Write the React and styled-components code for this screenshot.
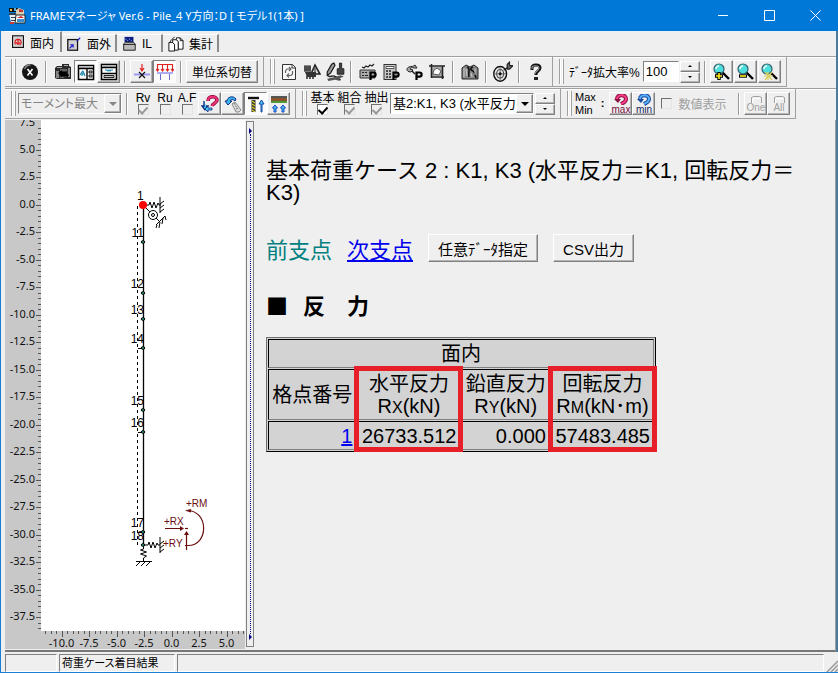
import React, { useState } from "react";
import styled, { createGlobalStyle, css } from "styled-components";

const FACE = "#efefef";
const UI_FONT = '"Liberation Sans", "Noto Sans CJK JP", sans-serif';

// ---- icons ----

const Icon = ({ children, size = 18 }) => (
  <svg width={size} height={size} viewBox="0 0 18 18" fill="none" aria-hidden="true">
    {children}
  </svg>
);

const AppIcon = () => (
  <Icon>
    <path d="M1 1h9v4H1z" fill="#111" />
    <path d="M2 2h2v2H2z" fill="#e8c040" />
    <path d="M6 1h2v3H6z" fill="#5ad" />
    <path d="M1 6h8v10H3z" fill="#e9eef2" />
    <path d="M1 6h8v2H1zM3 10h6v1H3zM3 13h5v1H3z" fill="#345" />
    <path d="M8 3l3-2 5 2v6H8z" fill="#d8d0b0" />
    <path d="M11 2l4 1v2h-4z" fill="#b33" />
    <path d="M8 8h9v8H7z" fill="#fff" stroke="#222" />
    <path d="M9 11l4-2 3 2z" fill="#c22" />
    <path d="M9 12h7v3H9z" fill="#3a8fd0" />
    <path d="M2 15h4v2H2z" fill="#c33" />
  </Icon>
);

const PlaneInIcon = () => (
  <Icon size={14}>
    <rect x="2" y="1" width="14" height="15" fill="#d0d0d0" stroke="#111" strokeWidth="1.4" />
    <path d="M6 12a4 4 0 1 1 5 1M9 6v6M6.500 9.500L9 12l2.500-2.500" stroke="#e01818" strokeWidth="1.5" />
  </Icon>
);

const PlaneOutIcon = () => (
  <Icon size={16}>
    <rect x="2" y="4" width="11" height="12" fill="#d0d0d0" stroke="#111" strokeWidth="1.4" />
    <path d="M4 14l4-4M5 10h3v3M12 6l4-4" stroke="#1818c8" strokeWidth="1.3" />
  </Icon>
);

const InfluenceIcon = () => (
  <Icon size={16}>
    <path d="M4 1h10v6H4z" fill="#0b1e86" />
    <path d="M5 3h1v1H5zM9 3h1v1H9zM7 5h1v1H7zM11 5h1v1h-1z" fill="#fff" />
    <path d="M3 9l2-2h9l2 2v7H3z" fill="#bbb" stroke="#111" />
    <path d="M3 9.500h13" stroke="#111" />
  </Icon>
);

const SummaryIcon = () => (
  <Icon size={17}>
    <path d="M2 8h4l2 2v7H2z" fill="#fff" stroke="#111" />
    <path d="M6 5h4l2 2v9H8v-6L6 8z" fill="#fff" stroke="#111" />
    <path d="M10 3h4l3 3v9h-5V7l-2-2z" fill="#fff" stroke="#111" />
    <path d="M14 3v3h3M4 6l4-4M3 8l1-2" stroke="#111" />
  </Icon>
);

const StopIcon = () => (
  <Icon>
    <circle cx="9" cy="9" r="8" fill="#161616" />
    <path d="M3.500 6a6.500 6.500 0 0 1 6-4" stroke="#888" strokeWidth="1.4" />
    <path d="M6.500 6l5 6.500M11.500 6l-5 6.500" stroke="#fff" strokeWidth="1.600" />
  </Icon>
);

const CameraIcon = () => (
  <Icon>
    <path d="M1 5l2-2h5V1h7v2l2 1v12H3l-2-1z" fill="#2a2a2a" />
    <path d="M10 2h4v1h-4zM3 4h5v1H3z" fill="#a8a8a8" />
    <path d="M2 8h3v7H2zM14 5h2v9h-2z" fill="#858585" />
    <path d="M6 6h7v2H6zM6 14h4v1H6z" fill="#666" />
    <path d="M4 10l4-3v2h4l3 3-2 3v-2H8v1z" fill="#000" />
  </Icon>
);

const SplitViewIcon = () => (
  <Icon>
    <path d="M1.500 2.500h15v14h-15z" fill="#fff" stroke="#000" strokeWidth="1.6" />
    <path d="M2 3h14v2H2z" fill="#bbb" />
    <path d="M2 5.500h15M10 5v11" stroke="#000" strokeWidth="1.400" />
    <path d="M3 12l2-3v4M6 8l2 5M5 11h3" stroke="#1f8ab0" strokeWidth="1.2" />
    <path d="M12 8h3v2h-3zM12 12h3v2h-3z" fill="#ccc" stroke="#222" />
  </Icon>
);

const StackViewIcon = () => (
  <Icon>
    <rect x="1.500" y="1.500" width="15" height="15" fill="#fff" stroke="#000" strokeWidth="1.6" />
    <path d="M2 2h14v2H2z" fill="#bbb" />
    <path d="M2 4.500h14M2 10.500h15" stroke="#000" strokeWidth="1.400" />
    <path d="M5 7h2l1 1 1-1 1 1 1-1h2" stroke="#1f8ab0" strokeWidth="1.2" />
    <path d="M4 12.500h10v2H4z" fill="#ccc" stroke="#222" />
  </Icon>
);

const PointLoadIcon = () => (
  <Icon>
    <path d="M9 1v6M7 5l2 3 2-3" stroke="#e02020" strokeWidth="1.2" />
    <path d="M1 11.500h16" stroke="#9a9af4" strokeWidth="2" />
    <path d="M6 9l6 6M12 9l-6 6" stroke="#111" strokeWidth="1.2" />
  </Icon>
);

const SpreadLoadIcon = () => (
  <Icon>
    <path d="M1.500 8V1.500h15V8M6.500 2v6M11.500 2v6M0 6l1.500 2L3 6M5 6l1.500 2L8 6M10 6l1.500 2L13 6M15 6l1.500 2L18 6" stroke="#e02020" strokeWidth="1.1" />
    <path d="M1 10h16" stroke="#9a9af4" strokeWidth="1.6" />
    <path d="M4.500 11v6M13.500 11v6" stroke="#6c6cc8" />
  </Icon>
);

const RefreshIcon = () => (
  <Icon>
    <path d="M2.500 1.500h10l3 3v12h-13z" fill="#f8f8f8" stroke="#333" />
    <path d="M12 2v3h4" stroke="#333" />
    <path d="M5.500 10V8l1.500-2h4M9 4l2 2-2 2M12.500 8v3L11 12.500H7M9 10.500l-2 2 2 2" stroke="#666" strokeWidth="1.200" />
  </Icon>
);

const LoadEditIcon = () => (
  <Icon>
    <path d="M1 3h7v6H1z" fill="#777" />
    <path d="M1 3h7M1 5h7M1 7h7" stroke="#222" />
    <path d="M8 11l4-9 5 9z" fill="#ddd" stroke="#222" strokeWidth="1.6" />
    <path d="M2 9h11v5H4z" fill="#333" />
    <path d="M4 13v3M7 13v3M10 13v3" stroke="#333" strokeWidth="1.6" />
    <path d="M12 5v4" stroke="#222" />
  </Icon>
);

const BrushIcon = () => (
  <Icon size={20}>
    <path d="M2 9L6 2l2-1 1 2-4 7-3 2z" fill="#999" stroke="#111" />
    <path d="M13 1h2v5h2v5h-6V6h2z" fill="#444" stroke="#111" strokeWidth=".7" />
    <path d="M2 12c3 3 4-1 7 1l5 3" stroke="#222" strokeWidth="1.3" />
    <path d="M2 15l5-1 7-2 3 1-5 2 2 2-5-1-6 1z" fill="#555" />
  </Icon>
);

// small P mark shared by the print family of icons
const PrintMark = () => (
  <path d="M11.500 17V9.500h3a2 2 0 0 1 0 4.200h-3" stroke="#000" strokeWidth="2.200" />
);

const PrintSetIcon = () => (
  <Icon>
    <path d="M1 7h15v8H1z" fill="#aaa" stroke="#333" />
    <path d="M3 9h2v1H3zM6 9h2v1H6zM3 12h2v1H3zM6 12h3v1H6z" fill="#222" />
    <path d="M3 4l2 1 2-2 2 1 2-2 2 1 2-2" stroke="#222" strokeWidth="1.200" />
    <PrintMark />
  </Icon>
);

const PrintCalcIcon = () => (
  <Icon>
    <rect x="2" y="1.500" width="12" height="15" fill="#c8c8c8" stroke="#333" />
    <path d="M4 3.500h8v2H4z" fill="#fff" stroke="#333" strokeWidth=".8" />
    <path d="M4 8h2M7 8h2M4 11h2M7 11h2M4 14h2M7 14h2" stroke="#222" strokeWidth="1.300" />
    <PrintMark />
  </Icon>
);

const PrintFormIcon = () => (
  <Icon>
    <path d="M6 9C1 9 1 5 4 4s4 0 6-2l2 3H9C7 4 5 5 5 6s2 0 3 1z" fill="#aaa" stroke="#222" />
    <path d="M7 8l3 3" stroke="#222" strokeWidth="1.500" />
    <PrintMark />
  </Icon>
);

const DiagramIcon = () => (
  <Icon>
    <path d="M4 4h10v9H4z" fill="#aaa" />
    <path d="M1 3h16M3.500 1v14M3 14h13M14.500 3v13" stroke="#222" strokeWidth="1.600" />
    <path d="M5 11c0-3 2-5 4-6l4 3-2 4z" fill="#fff" stroke="#333" strokeWidth=".8" />
  </Icon>
);

const HelpBookIcon = () => (
  <Icon>
    <path d="M1 5l4-3 4 2 4-2 4 3v11H1z" fill="#888" stroke="#222" />
    <path d="M6 4c4 1 1 5 2 10M12 4c-4 2-2 3 0 4s2 4 3 7" stroke="#111" strokeWidth="1.600" />
    <path d="M3 5v9M5 6l1 7M10 10l1 4M14 6v6" stroke="#ccc" />
  </Icon>
);

const TargetIcon = () => (
  <Icon size={21}>
    <ellipse cx="7" cy="11" rx="5.500" ry="6.300" fill="#e8e8e8" stroke="#111" strokeWidth="1.200" />
    <ellipse cx="7" cy="11" rx="3" ry="3.700" stroke="#444" />
    <path d="M7 5v12M2 11h10" stroke="#666" strokeWidth=".8" />
    <circle cx="7" cy="11" r="1.300" fill="#111" />
    <path d="M10 8l4-3M13 3l2-2v3h3l-3 3h-2z" fill="#777" stroke="#222" />
  </Icon>
);

const QuestionIcon = () => (
  <Icon>
    <path d="M5 7V5c0-4 8-4 8 0 0 3-4 3-4 6v1" stroke="#111" strokeWidth="3" />
    <path d="M5 6V5c0-3 7-3 7 0 0 3-4 3-4 6" stroke="#999" strokeWidth="1.100" />
    <path d="M7 14h4v3H7z" fill="#222" />
  </Icon>
);

const LensIcon = ({ kind }) => (
  <Icon>
    <path d="M10 9l7 7" stroke="#000" strokeWidth="2.400" />
    <circle cx="7" cy="6" r="5" fill="#4fdede" stroke="#34606c" strokeWidth="1.200" />
    <path d="M4 6a3 3 0 0 1 3-3" stroke="#e8ffff" strokeWidth="1.500" />
    {kind === "in" && (
      <>
        <path d="M7 9v8M3 13h8" stroke="#000" strokeWidth="3.400" />
        <path d="M7 10v6M4 13h6" stroke="#ffee20" strokeWidth="1.600" />
      </>
    )}
    {kind === "out" && (
      <>
        <path d="M3 13h8" stroke="#000" strokeWidth="3.400" />
        <path d="M4 13h6" stroke="#ffee20" strokeWidth="1.600" />
      </>
    )}
    {kind === "fit" && (
      <path d="M8 9v8M4 13h9M5 9l7 8M12 9l-7 8" stroke="#d8cf60" strokeWidth="1.200" />
    )}
  </Icon>
);

const RotateLoadIcon = () => (
  <Icon>
    <path d="M7 6c0-6 9-5 9-1 0 3-4 3-5 6" stroke="#8a1040" strokeWidth="3.600" />
    <path d="M7 6c0-6 9-5 9-1 0 3-4 3-5 6" stroke="#f03078" strokeWidth="2" />
    <path d="M3 6v5h-2l3 4 3-4H5M5 14h6" stroke="#102a80" strokeWidth="1.300" fill="#48c8f0" />
    <path d="M7 11l-3 3 3 3v-2h4v-2H7z" stroke="#102a80" strokeWidth=".8" fill="#48c8f0" />
  </Icon>
);

const RotateShapeIcon = () => (
  <Icon>
    <path d="M12 4c-3-4-9-2-9 2H1l3 4 4-4H6c1-2 3-2 5 0z" fill="#38b8f0" stroke="#102a80" />
    <path d="M8 9l3-2 6 8-2 2h-3z" fill="#ddd" stroke="#888" />
    <path d="M10 8l3 5M12 14l3-1" stroke="#777" strokeDasharray="2 1" />
  </Icon>
);

const SoilIcon = () => (
  <Icon>
    <path d="M1 3h11" stroke="#111" strokeWidth="2.400" />
    <path d="M6.500 5v12" stroke="#333" strokeWidth="4" />
    <path d="M5 6l3 2M5 9l3 2M5 12l3 2M5 15l3 2" stroke="#d8c828" strokeWidth="1.300" />
    <path d="M14 17V9h-2l2.500-4L17 9h-2v8z" stroke="#1648a8" fill="#48c8f0" />
  </Icon>
);

const StrataIcon = () => (
  <Icon>
    <path d="M1 1h16v2H1z" fill="#555" />
    <path d="M1 3h16v3H1z" fill="#7a5a28" />
    <path d="M1 6h16v2H1z" fill="#4f9a38" />
    <path d="M1 4.500h16" stroke="#c04028" strokeDasharray="2 1" />
    <path d="M4 17v-4H2.500L5 10l2.500 3H6v4zM12 17v-4h-1.500L13 10l2.500 3H14v4z" stroke="#1648c8" fill="#48c8f0" />
  </Icon>
);

const ArcIcon = ({ color, dark }) => (
  <svg width="16" height="11" viewBox="0 0 16 11" fill="none" aria-hidden="true">
    <path d="M4 5c0-5 9-5 9 0 0 3-3 4-5 5" stroke={dark} strokeWidth="4" />
    <path d="M4 5c0-5 9-5 9 0 0 3-3 4-5 5" stroke={color} strokeWidth="2" />
    <path d="M1 5h7l-3 4z" fill={dark} />
  </svg>
);

const FrameIcon = () => (
  <svg width="16" height="8" viewBox="0 0 16 8" fill="none" aria-hidden="true">
    <path d="M3.500 8V2.500l2-1h6l2 1V8" stroke="#a0a0a0" />
    <path d="M4.500 8V3.500h8" stroke="#fff" />
  </svg>
);

// ---- model view ----

const MEMBER_NODES = [
  { label: "11", y: 242 },
  { label: "12", y: 293 },
  { label: "13", y: 319 },
  { label: "14", y: 348 },
  { label: "15", y: 410 },
  { label: "16", y: 432 },
  { label: "17", y: 532 },
  { label: "18", y: 545 },
];

const ORIGIN_Y = 204.5;
const ORIGIN_X = 171.5;
const STEP = 27.5;
const MINOR = STEP / 5;

const yTicks = [];
for (let i = -14; i <= 77; i++) yTicks.push(i);
const xTicks = [];
for (let i = -23; i <= 13; i++) xTicks.push(i);

const ModelView = () => (
  <ModelSvg viewBox="5 120 240 529" role="img">
    <rect x="5" y="120" width="240" height="529" fill="#c8c8c8" />
    <rect x="41" y="120" width="204" height="511" fill="#fff" />

    <g stroke="#555">
      {yTicks.map((i) => (
        <path key={i} d={`M${i % 5 === 0 ? 36 : 38} ${Math.round(ORIGIN_Y + i * MINOR) + 0.5}H41`} />
      ))}
      {xTicks.map((i) => (
        <path key={i} d={`M${Math.round(ORIGIN_X + i * MINOR) + 0.5} 631V${i % 5 === 0 ? 637 : 634}`} />
      ))}
    </g>
    <g fontFamily='"Noto Sans"' fontSize="11" fill="#111">
      {yTicks.filter((i) => i % 5 === 0).map((i) => (
        <text key={i} x="35" y={ORIGIN_Y + i * MINOR + 3} textAnchor="end">
          {(-i / 2 || 0).toFixed(1)}
        </text>
      ))}
      <text x="35" y="126" textAnchor="end">7.5</text>
      {xTicks.filter((i) => i % 5 === 0).map((i) => (
        <text key={i} x={ORIGIN_X + i * MINOR} y="647" textAnchor="middle">
          {(i / 2).toFixed(1)}
        </text>
      ))}
    </g>

    <path d="M137.500 206V545" stroke="#000" strokeDasharray="3 3" />
    <path d="M143.500 205V545" stroke="#000" strokeWidth="1.300" />
    <g fontFamily='"Liberation Sans"' fontSize="12" fill="#000">
      <text x="137" y="200">1</text>
      {MEMBER_NODES.map((n) => (
        <text key={n.label} x="144" y={n.y - 5} textAnchor="end">
          {n.label}
        </text>
      ))}
    </g>
    {MEMBER_NODES.map((n) => (
      <ellipse key={n.label} cx="143" cy={n.y} rx="1.800" ry="1.300" fill="#2f9a86" stroke="#000" />
    ))}
    <path d="M138 348.500h4M138 432.500h4M138 532.500h4" stroke="#000" />

    {/* supports at the pile head */}
    <g stroke="#000" fill="none">
      <path d="M145 205h4l1-3 2 6 2-6 2 6 2-5 1 2h2M160 197v16M160 204l4-3M160 208l4-3M160 212l4-3" />
      <path d="M145 207l15 15M156 225l9-9M160 222l-1 6M157 225l-1 3M163 218l-1 6M165 216l1 4" />
      <circle cx="153" cy="215" r="4.500" fill="#fff" />
      <circle cx="153" cy="215" r="1.500" />
    </g>
    <circle cx="143" cy="205" r="4" fill="#f00" />

    {/* supports at the pile tip */}
    <g stroke="#000" fill="none">
      <path d="M145 545h3l1-3 2 6 2-6 2 6 2-5 1 2h2M160 537v16M160 544l4-3M160 548l4-3M160 552l4-3" />
      <path d="M143.500 546v3l-3 1 6 2-6 2 6 2-3 2v4M136 561.500h16M136 566l4-4M141 566l4-4M146 566l4-4" />
    </g>

    {/* sign convention */}
    <g stroke="#6b0f0f" fill="none" strokeWidth="1.200">
      <path d="M165 528.500h17M186.500 532v18M187 510.500c22 0 22 35 1 35M191 512l-4-1.500 4-1M185 545.500h4" />
      <path d="M180 526v5l4-2.500zM184 535h5l-2.500-4z" fill="#6b0f0f" stroke="none" />
      <path d="M185 528.500h3" />
    </g>
    <g fontFamily='"Liberation Sans"' fontSize="10" fill="#6b0f0f">
      <text x="164" y="525">+RX</text>
      <text x="163" y="547">+RY</text>
      <text x="186" y="507">+RM</text>
    </g>
  </ModelSvg>
);

const TABS = [
  { label: "面内", icon: <PlaneInIcon /> },
  { label: "面外", icon: <PlaneOutIcon /> },
  { label: "IL", icon: <InfluenceIcon /> },
  { label: "集計", icon: <SummaryIcon /> },
];

function Stepper({ name }) {
  return (
    <StepBox>
      <StepButton aria-label={`${name} +`}>
        <Arrow $up />
      </StepButton>
      <StepButton aria-label={`${name} -`}>
        <Arrow />
      </StepButton>
    </StepBox>
  );
}

function StackCheck({ label, width, ...rest }) {
  return (
    <StackLabel $width={width}>
      {label}
      <Check type="checkbox" {...rest} />
    </StackLabel>
  );
}

export default function App() {
  const [tab, setTab] = useState("面内");
  const [scale, setScale] = useState("100");

  return (
    <Window>
      <Global />
      <TitleBar>
        <AppIcon />
        <Title>FRAMEマネージャ Ver.6 - Pile_4 Y方向：D [ モデル1(1本) ]</Title>
        <TitleButton aria-label="最小化">
          <svg width="11" height="11" stroke="#fff"><path d="M0 5.500h10" /></svg>
        </TitleButton>
        <TitleButton aria-label="最大化">
          <svg width="11" height="11" stroke="#fff" fill="none"><path d="M.5.5h10v10H.5z" /></svg>
        </TitleButton>
        <TitleButton aria-label="閉じる">
          <svg width="11" height="11" stroke="#fff"><path d="M.5.5l10 10M10.500.5l-10 10" /></svg>
        </TitleButton>
      </TitleBar>

      <Frame>
        <Tabs>
          {TABS.map((t) => (
            <Tab key={t.label} $active={tab === t.label} onClick={() => setTab(t.label)}>
              {t.icon}
              {t.label}
            </Tab>
          ))}
        </Tabs>

        <Toolbar>
          <Band>
            <Grip />
            <Tool aria-label="終了"><StopIcon /></Tool>
            <Sep />
            <Tool aria-label="キャプチャ"><CameraIcon /></Tool>
            <Tool $look="down" aria-label="左右表示"><SplitViewIcon /></Tool>
            <Tool $look="up" aria-label="上下表示"><StackViewIcon /></Tool>
            <Sep />
            <Tool $look="up" aria-label="集中荷重"><PointLoadIcon /></Tool>
            <Tool $look="down" aria-label="分布荷重"><SpreadLoadIcon /></Tool>
            <Sep />
            <TextButton>単位系切替</TextButton>
          </Band>
          <Band>
            <Grip />
            <Tool aria-label="更新"><RefreshIcon /></Tool>
            <Tool aria-label="荷重"><LoadEditIcon /></Tool>
            <Tool aria-label="描画"><BrushIcon /></Tool>
            <Sep />
            <Tool aria-label="印刷設定"><PrintSetIcon /></Tool>
            <Tool aria-label="計算印刷"><PrintCalcIcon /></Tool>
            <Tool aria-label="形状印刷"><PrintFormIcon /></Tool>
            <Tool aria-label="図"><DiagramIcon /></Tool>
            <Sep />
            <Tool aria-label="資料"><HelpBookIcon /></Tool>
            <Sep />
            <Tool aria-label="対象"><TargetIcon /></Tool>
            <Sep />
            <Tool aria-label="ヘルプ"><QuestionIcon /></Tool>
          </Band>
          <Band>
            <Grip />
            <FieldLabel htmlFor="scale">ﾃﾞｰﾀ拡大率%</FieldLabel>
            <NumberInput id="scale" value={scale} onChange={(e) => setScale(e.target.value)} />
            <Stepper name="拡大率" />
            <Sep />
            <ToolGroup>
              <Tool $look="up" aria-label="拡大"><LensIcon kind="in" /></Tool>
              <Tool $look="up" aria-label="縮小"><LensIcon kind="out" /></Tool>
              <Tool $look="up" aria-label="全体"><LensIcon kind="fit" /></Tool>
            </ToolGroup>
          </Band>
        </Toolbar>

        <Toolbar>
          <Band>
            <Grip />
            <SelectBox $width={104} $disabled>
              <select disabled aria-label="抽出条件">
                <option>モーメント最大</option>
              </select>
              <DropMark><Arrow $size={4} /></DropMark>
            </SelectBox>
            <Sep />
            <StackCheck label="Rv" width={22} defaultChecked disabled />
            <StackCheck label="Ru" width={22} disabled />
            <StackCheck label="A.F" width={22} disabled />
            <Tool $look="up" aria-label="荷重回転"><RotateLoadIcon /></Tool>
            <Tool $look="up" aria-label="形状回転"><RotateShapeIcon /></Tool>
            <Tool $look="down" aria-label="地盤"><SoilIcon /></Tool>
            <Tool $look="up" aria-label="地層"><StrataIcon /></Tool>
          </Band>
          <Band>
            <Grip />
            <StackCheck label="基本" width={27} defaultChecked />
            <StackCheck label="組合" width={27} defaultChecked disabled />
            <StackCheck label="抽出" width={27} defaultChecked disabled />
            <SelectBox $width={144}>
              <select aria-label="荷重ケース">
                <option>基2:K1, K3 (水平反力＝K1, 回転反力＝K3)</option>
              </select>
              <DropMark><Arrow $size={4} /></DropMark>
            </SelectBox>
            <Stepper name="荷重ケース" />
          </Band>
          <Band>
            <Grip />
            <MaxMin>
              <span>Max<br />Min</span>
              <b>:</b>
            </MaxMin>
            <Tool $look="up" $caption="#7a0c3c">
              <ArcIcon color="#ff3c88" dark="#8a1040" />
              max
            </Tool>
            <Tool $look="up" $caption="#16205c">
              <ArcIcon color="#58b0ff" dark="#1c4c9c" />
              min
            </Tool>
            <CheckLabel>
              <Check type="checkbox" disabled />
              数値表示
            </CheckLabel>
            <Sep />
            <Tool $look="up" $caption="#a0a0a0" disabled>
              <FrameIcon />
              One
            </Tool>
            <Tool $look="up" $caption="#a0a0a0" disabled>
              <FrameIcon />
              All
            </Tool>
          </Band>
        </Toolbar>

        <Main>
          <ModelView />
          <Splitter>
            <SplitMark />
            <SplitLine />
            <SplitMark />
          </Splitter>

          <Report>
            <CaseName>基本荷重ケース 2 : K1, K3 (水平反力＝K1, 回転反力＝K3)</CaseName>
            <Actions>
              <span>前支点</span>
              <a href="#next">次支点</a>
              <ReportButton>任意ﾃﾞｰﾀ指定</ReportButton>
              <ReportButton>CSV出力</ReportButton>
            </Actions>
            <SectionTitle>■&nbsp;&nbsp; 反　力</SectionTitle>
            <ResultTable>
              <thead>
                <tr>
                  <th colSpan={4}>面内</th>
                </tr>
                <tr>
                  <th>格点番号</th>
                  <MarkedTh>水平反力<br />R<small>X</small>(kN)</MarkedTh>
                  <th>鉛直反力<br />R<small>Y</small>(kN)</th>
                  <MarkedTh>回転反力<br />R<small>M</small>(kN･m)</MarkedTh>
                </tr>
              </thead>
              <tbody>
                <tr>
                  <td><a href="#node-1">1</a></td>
                  <td>26733.512</td>
                  <td>0.000</td>
                  <td>57483.485</td>
                </tr>
              </tbody>
            </ResultTable>
          </Report>
        </Main>
      </Frame>

      <StatusBar>
        <StatusCell $width={52} />
        <StatusCell $width={116}>荷重ケース着目結果</StatusCell>
        <StatusCell />
        <svg width="12" height="12" stroke="#999" strokeWidth="1.500">
          <path d="M1 12L12 1M5 12l7-7M9 12l3-3" />
        </svg>
      </StatusBar>
    </Window>
  );
}

const Global = createGlobalStyle`
  * {
    box-sizing: border-box;
  }
  body {
    margin: 0;
    background: ${FACE};
    font-family: ${UI_FONT};
    font-size: 12px;
    color: #000;
  }
  button, input, select {
    font: inherit;
    color: inherit;
    margin: 0;
    border-radius: 0;
  }
`;

const raised = css`
  border: 1px solid;
  border-color: #fff #808080 #808080 #fff;
  box-shadow: inset -1px -1px 0 #b4b4b4;
`;

const sunken = css`
  border: 1px solid;
  border-color: #808080 #fff #fff #808080;
`;

const Window = styled.div`
  display: flex;
  flex-direction: column;
  min-height: 100vh;
  border-left: 1px solid #1b7fd6;
  border-bottom: 1px solid #1b7fd6;
  font-feature-settings: "palt";
`;

const TitleBar = styled.header`
  display: flex;
  align-items: center;
  height: 31px;
  padding-left: 8px;
  margin-left: -1px;
  background: #0078d7;
  color: #fff;
`;

const Title = styled.span`
  flex: 1;
  padding-left: 4px;
  font-family: "Noto Sans", "Noto Sans CJK JP", sans-serif;
  font-size: 11px;
  line-height: 18px;
  white-space: nowrap;
`;

const TitleButton = styled.button`
  display: flex;
  align-items: center;
  justify-content: center;
  width: 46px;
  height: 31px;
  padding: 0;
  border: 0;
  background: none;
`;

const Frame = styled.div`
  flex: 1;
  display: flex;
  flex-direction: column;
  padding-left: 4px;
  border-right: 2px solid #4a7a9c;
`;

const Tabs = styled.nav`
  display: flex;
  align-items: flex-end;
  height: 25px;
  padding-bottom: 4px;
`;

const Tab = styled.button`
  display: flex;
  align-items: center;
  gap: 5px;
  min-width: 46px;
  height: ${({ $active }) => ($active ? 21 : 18)}px;
  padding: 0 ${({ $active }) => ($active ? 6 : 4)}px;
  border: 0;
  border-right: 2px solid #8c8c8c;
  border-top: 1px solid #fff;
  background: ${FACE};
`;

const Toolbar = styled.div`
  display: flex;
  height: 32px;
  border-top: 1px solid #a0a0a0;
  box-shadow: inset 0 1px 0 #fff;
`;

const Band = styled.div`
  display: flex;
  align-items: center;
  height: 30px;
  padding: 0 5px 0 6px;
  border-right: 1px solid #a0a0a0;
  border-bottom: 1px solid #a0a0a0;
  white-space: nowrap;
`;

const Grip = styled.div`
  flex: none;
  width: 5px;
  height: 25px;
  margin-right: 2px;
  border: solid #a0a0a0;
  border-width: 0 1px;
  background: linear-gradient(to right, #fff 1px, ${FACE} 1px, ${FACE} 2px, #fff 2px);
`;

const Sep = styled.div`
  flex: none;
  width: 2px;
  height: 22px;
  margin: 0 4px;
  border-left: 1px solid #999;
  border-right: 1px solid #fff;
`;

const Tool = styled.button`
  display: flex;
  flex-direction: column;
  align-items: center;
  justify-content: center;
  flex: none;
  width: 23px;
  height: 23px;
  padding: 0;
  border: 1px solid transparent;
  background: ${({ $look }) => ($look === "down" ? "#fbfbfb" : FACE)};
  ${({ $look }) => $look === "up" && raised}
  ${({ $look }) => $look === "down" && sunken}
  ${({ $caption }) =>
    $caption &&
    css`
      && {
        color: ${$caption};
      }
      font-size: 10px;
      line-height: 9px;
    `}
`;

const ToolGroup = styled.div`
  display: flex;
  gap: 1px;
`;

const TextButton = styled.button`
  ${raised}
  height: 23px;
  padding: 0 5px;
  background: ${FACE};
`;

const FieldLabel = styled.label`
  padding: 0 3px;
`;

const NumberInput = styled.input`
  ${sunken}
  width: 36px;
  height: 21px;
  padding: 0 2px;
  background: #fff;
  font-size: 13px;
`;

const StepBox = styled.div`
  display: flex;
  flex-direction: column;
  width: 20px;
  margin-left: 1px;
`;

const StepButton = styled.button`
  ${raised}
  display: flex;
  align-items: center;
  justify-content: center;
  height: 11px;
  padding: 0;
  background: ${FACE};
`;

const Arrow = styled.i`
  border: ${({ $size = 2 }) => $size}px solid transparent;
  border-top-color: ${({ $up }) => ($up ? "transparent" : "currentColor")};
  border-bottom-color: ${({ $up }) => ($up ? "currentColor" : "transparent")};
  border-${({ $up }) => ($up ? "top" : "bottom")}-width: 0;
`;

const DropMark = styled.span`
  display: flex;
  align-items: center;
  justify-content: center;
  flex: none;
  width: 17px;
  ${raised}
  background: ${FACE};
  pointer-events: none;
`;

const SelectBox = styled.div`
  display: flex;
  width: ${({ $width }) => $width}px;
  height: 21px;
  ${sunken}
  background: ${({ $disabled }) => ($disabled ? FACE : "#fff")};
  color: ${({ $disabled }) => ($disabled ? "#858585" : "#000")};
  font-size: ${({ $disabled }) => ($disabled ? 12 : 13)}px;

  select {
    flex: 1;
    min-width: 0;
    padding: 0 0 0 2px;
    border: 0;
    background: none;
    appearance: none;
    text-overflow: clip;
    opacity: 1;
  }
`;

const StackLabel = styled.label`
  display: flex;
  flex-direction: column;
  align-items: center;
  width: ${({ $width }) => $width}px;
  line-height: 12px;
`;

const Check = styled.input`
  appearance: none;
  display: flex;
  justify-content: center;
  flex: none;
  width: 11px;
  height: 11px;
  border: 1px solid;
  border-color: #707070 #e4e4e4 #e4e4e4 #707070;
  background: ${({ disabled }) => (disabled ? FACE : "#fff")};

  &:checked::after {
    content: "";
    width: 4px;
    height: 7px;
    border: solid ${({ disabled }) => (disabled ? "#999" : "#000")};
    border-width: 0 2px 2px 0;
    transform: rotate(42deg);
  }
`;

const MaxMin = styled.div`
  display: flex;
  align-items: center;
  gap: 5px;
  padding: 0 5px 0 1px;
  font-size: 11px;
  line-height: 13px;
`;

const CheckLabel = styled.label`
  display: flex;
  align-items: center;
  gap: 6px;
  padding: 0 8px 0 6px;
  color: #a0a0a0;
`;

const Main = styled.main`
  flex: 1;
  display: flex;
  border-right: 1px solid #a0a0a0;
  border-bottom: 2px solid #777;
`;

const ModelSvg = styled.svg`
  flex: none;
  width: 240px;
  height: 529px;
`;

const Splitter = styled.div`
  flex: none;
  display: flex;
  flex-direction: column;
  align-items: center;
  width: 8px;
  margin: 1px 0 3px 1px;
  padding: 6px 0;
  border: 1px solid #808080;
`;

const SplitMark = styled.i`
  border: 3px solid transparent;
  border-left: 3px solid #000080;
  border-right: 0;
`;

const SplitLine = styled.i`
  flex: 1;
  border-left: 1px dotted #000080;
`;

const Report = styled.section`
  flex: 1;
  min-width: 0;
  padding: 40px 40px 0 12px;
  font-feature-settings: normal;
`;

const CaseName = styled.p`
  margin: 0;
  font-size: 22px;
  line-height: 22px;
`;

const Actions = styled.div`
  display: flex;
  align-items: center;
  gap: 15px;
  margin-top: 28px;
  font-size: 22px;
  color: #008080;

  a {
    color: #0000ee;
  }
`;

const ReportButton = styled.button`
  ${raised}
  height: 28px;
  padding: 0 9px;
  background: ${FACE};
  color: #000;
  font-size: 15px;
`;

const SectionTitle = styled.h2`
  margin: 24px 0 17px;
  font-family: "Noto Sans CJK JP", sans-serif;
  font-size: 22px;
  line-height: 32px;
`;

const ResultTable = styled.table`
  width: 390px;
  border: 1px solid;
  border-color: #707070 #000 #000 #707070;
  border-spacing: 1px;
  background: #d3d3d3;
  font-size: 20px;
  line-height: 22px;

  th,
  td {
    padding: 3px 3px 2px;
    border: 1px solid;
    border-color: #000 #808080 #808080 #000;
    font-weight: normal;
    white-space: nowrap;
  }
  td {
    text-align: right;
  }
  small {
    font-size: 16px;
    line-height: 16px;
  }
  a {
    color: #0000ee;
  }
`;

// red frame round the heading and the value below it
const MarkedTh = styled.th`
  position: relative;

  &::after {
    content: "";
    position: absolute;
    inset: -4px -4px -33px;
    border: 5px solid #e71f28;
    pointer-events: none;
  }
`;

const StatusBar = styled.footer`
  display: flex;
  align-items: flex-end;
  gap: 2px;
  height: 20px;
  padding: 1px 0 0 4px;
`;

const StatusCell = styled.div`
  ${sunken}
  flex: ${({ $width }) => ($width ? "none" : 1)};
  width: ${({ $width }) => ($width ? `${$width}px` : "auto")};
  height: 18px;
  padding-left: 2px;
  font-size: 11px;
  line-height: 16px;
  white-space: nowrap;
`;
